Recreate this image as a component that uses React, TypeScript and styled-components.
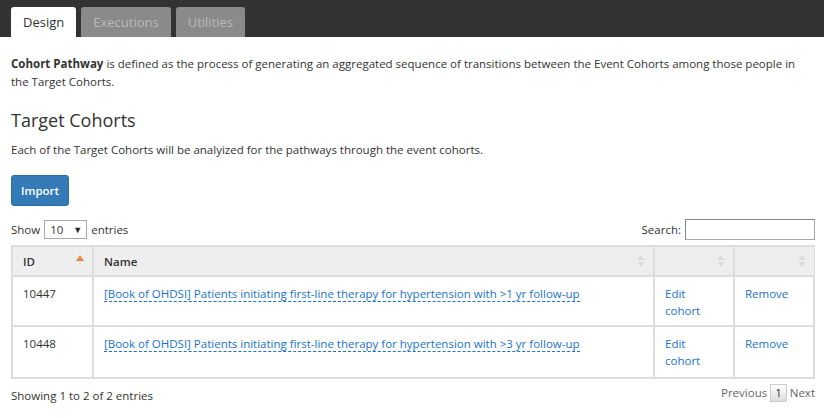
import React from "react";
import styled, { createGlobalStyle } from "styled-components";

const Global = createGlobalStyle`
  html, body { margin: 0; padding: 0; background: #fff; }
  body { font-family: "Open Sans", "Noto Sans", sans-serif; font-size: 11.5px; color: #333; }
  * { box-sizing: border-box; }
`;

const Page = styled.div`
  width: 824px;
  height: 418px;
  overflow: hidden;
`;

const TabBar = styled.div`
  height: 37px;
  background: #333;
  display: flex;
  align-items: flex-end;
  gap: 5px;
  padding-left: 11px;
`;

const Tab = styled.div<{ $active?: boolean }>`
  height: 30px;
  padding: 0 12px;
  display: flex;
  align-items: center;
  border-radius: 3px 3px 0 0;
  font-size: 13px;
  background: ${(p) => (p.$active ? "#fff" : "#8a8a8a")};
  color: ${(p) => (p.$active ? "#333" : "#b9b9b9")};
`;

const Content = styled.div`
  padding: 18px 9px 0 11px;
`;

const Intro = styled.p`
  margin: 0;
  line-height: 18px;
`;

const Strong = styled.strong`
  font-weight: 700;
`;

const Heading = styled.h3`
  margin: 17px 0 0;
  font-size: 18px;
  font-weight: 400;
  line-height: 24px;
`;

const Sub = styled.p`
  margin: 9px 0 0;
  line-height: 18px;
`;

const Button = styled.button`
  margin-top: 16px;
  width: 58px;
  height: 31px;
  background: #337ab7;
  border: 1px solid #2e6da4;
  border-radius: 3px;
  color: #fff;
  font-family: inherit;
  font-size: 11.5px;
  font-weight: 600;
  padding: 0;
`;

const Controls = styled.div`
  margin-top: 12px;
  display: flex;
  justify-content: space-between;
  align-items: center;
  height: 22px;
`;

const Inline = styled.div`
  display: flex;
  align-items: center;
  gap: 4px;
`;

const Select = styled.div`
  width: 43px;
  height: 19px;
  border: 1px solid #a9a9a9;
  display: flex;
  align-items: center;
  justify-content: space-between;
  padding: 0 4px 0 5px;
  span { font-size: 9px; color: #222; }
`;

const SearchInput = styled.div`
  width: 130px;
  height: 21px;
  border: 1px solid #a9a9a9;
  border-top-color: #888;
  border-left-color: #888;
`;

const Table = styled.div`
  margin-top: 5px;
  border: 2px solid #ddd;
  display: grid;
  grid-template-columns: 81px 561px 80px 79px;
`;

const Th = styled.div<{ $last?: boolean }>`
  background: #eee;
  height: 30px;
  border-right: ${(p) => (p.$last ? "none" : "2px solid #ddd")};
  border-bottom: 2px solid #ddd;
  display: flex;
  align-items: center;
  justify-content: space-between;
  padding: 0 8px 0 10px;
  font-weight: 600;
  color: #333;
`;

const Td = styled.div<{ $last?: boolean; $bottom?: boolean }>`
  height: 50px;
  border-right: ${(p) => (p.$last ? "none" : "2px solid #ddd")};
  border-bottom: ${(p) => (p.$bottom ? "none" : "2px solid #ddd")};
  padding: 8px 10px;
  line-height: 17px;
`;

const CohortLink = styled.a`
  color: #1a73c9;
  text-decoration: none;
  border-bottom: 1px dashed #1a73c9;
`;

const ActionLink = styled.a`
  color: #1a73c9;
  text-decoration: none;
  display: block;
  width: 40px;
`;

const Footer = styled.div`
  margin-top: 3px;
  display: flex;
  justify-content: space-between;
  align-items: center;
`;

const Info = styled.div`
  padding-top: 6px;
`;

const Pager = styled.div`
  display: flex;
  align-items: center;
  gap: 3px;
  color: #666;
`;

const PageNum = styled.span`
  border: 1px solid #ccc;
  background: linear-gradient(#fff, #dcdcdc);
  padding: 0 4px;
  line-height: 16px;
  color: #333;
`;

const SortBoth = () => (
  <svg width="8" height="14" viewBox="0 0 8 14">
    <path d="M4 1 L7.5 6 H0.5 Z" fill="#dadada" />
    <path d="M4 13 L7.5 8 H0.5 Z" fill="#dadada" />
  </svg>
);

const SortAsc = () => (
  <svg width="8" height="14" viewBox="0 0 8 14">
    <path d="M4 1 L8 7 H0 Z" fill="#f0883d" />
  </svg>
);

const rows = [
  { id: "10447", name: "[Book of OHDSI] Patients initiating first-line therapy for hypertension with >1 yr follow-up" },
  { id: "10448", name: "[Book of OHDSI] Patients initiating first-line therapy for hypertension with >3 yr follow-up" },
];

export default function App() {
  return (
    <Page>
      <Global />
      <TabBar>
        <Tab $active>Design</Tab>
        <Tab>Executions</Tab>
        <Tab>Utilities</Tab>
      </TabBar>
      <Content>
        <Intro>
          <Strong>Cohort Pathway</Strong> is defined as the process of generating an aggregated sequence of transitions between the Event Cohorts among those people in the Target Cohorts.
        </Intro>
        <Heading>Target Cohorts</Heading>
        <Sub>Each of the Target Cohorts will be analyized for the pathways through the event cohorts.</Sub>
        <Button>Import</Button>
        <Controls>
          <Inline>
            Show
            <Select>
              10 <span>▼</span>
            </Select>
            entries
          </Inline>
          <Inline>
            Search:
            <SearchInput />
          </Inline>
        </Controls>
        <Table>
          <Th>
            ID <SortAsc />
          </Th>
          <Th>
            Name <SortBoth />
          </Th>
          <Th>
            <span /> <SortBoth />
          </Th>
          <Th $last>
            <span /> <SortBoth />
          </Th>
          {rows.map((r, i) => {
            const bottom = i === rows.length - 1;
            return (
              <React.Fragment key={r.id}>
                <Td $bottom={bottom}>{r.id}</Td>
                <Td $bottom={bottom}>
                  <CohortLink>{r.name}</CohortLink>
                </Td>
                <Td $bottom={bottom}>
                  <ActionLink>Edit cohort</ActionLink>
                </Td>
                <Td $bottom={bottom} $last>
                  <ActionLink>Remove</ActionLink>
                </Td>
              </React.Fragment>
            );
          })}
        </Table>
        <Footer>
          <Info>Showing 1 to 2 of 2 entries</Info>
          <Pager>
            Previous <PageNum>1</PageNum> Next
          </Pager>
        </Footer>
      </Content>
    </Page>
  );
}
